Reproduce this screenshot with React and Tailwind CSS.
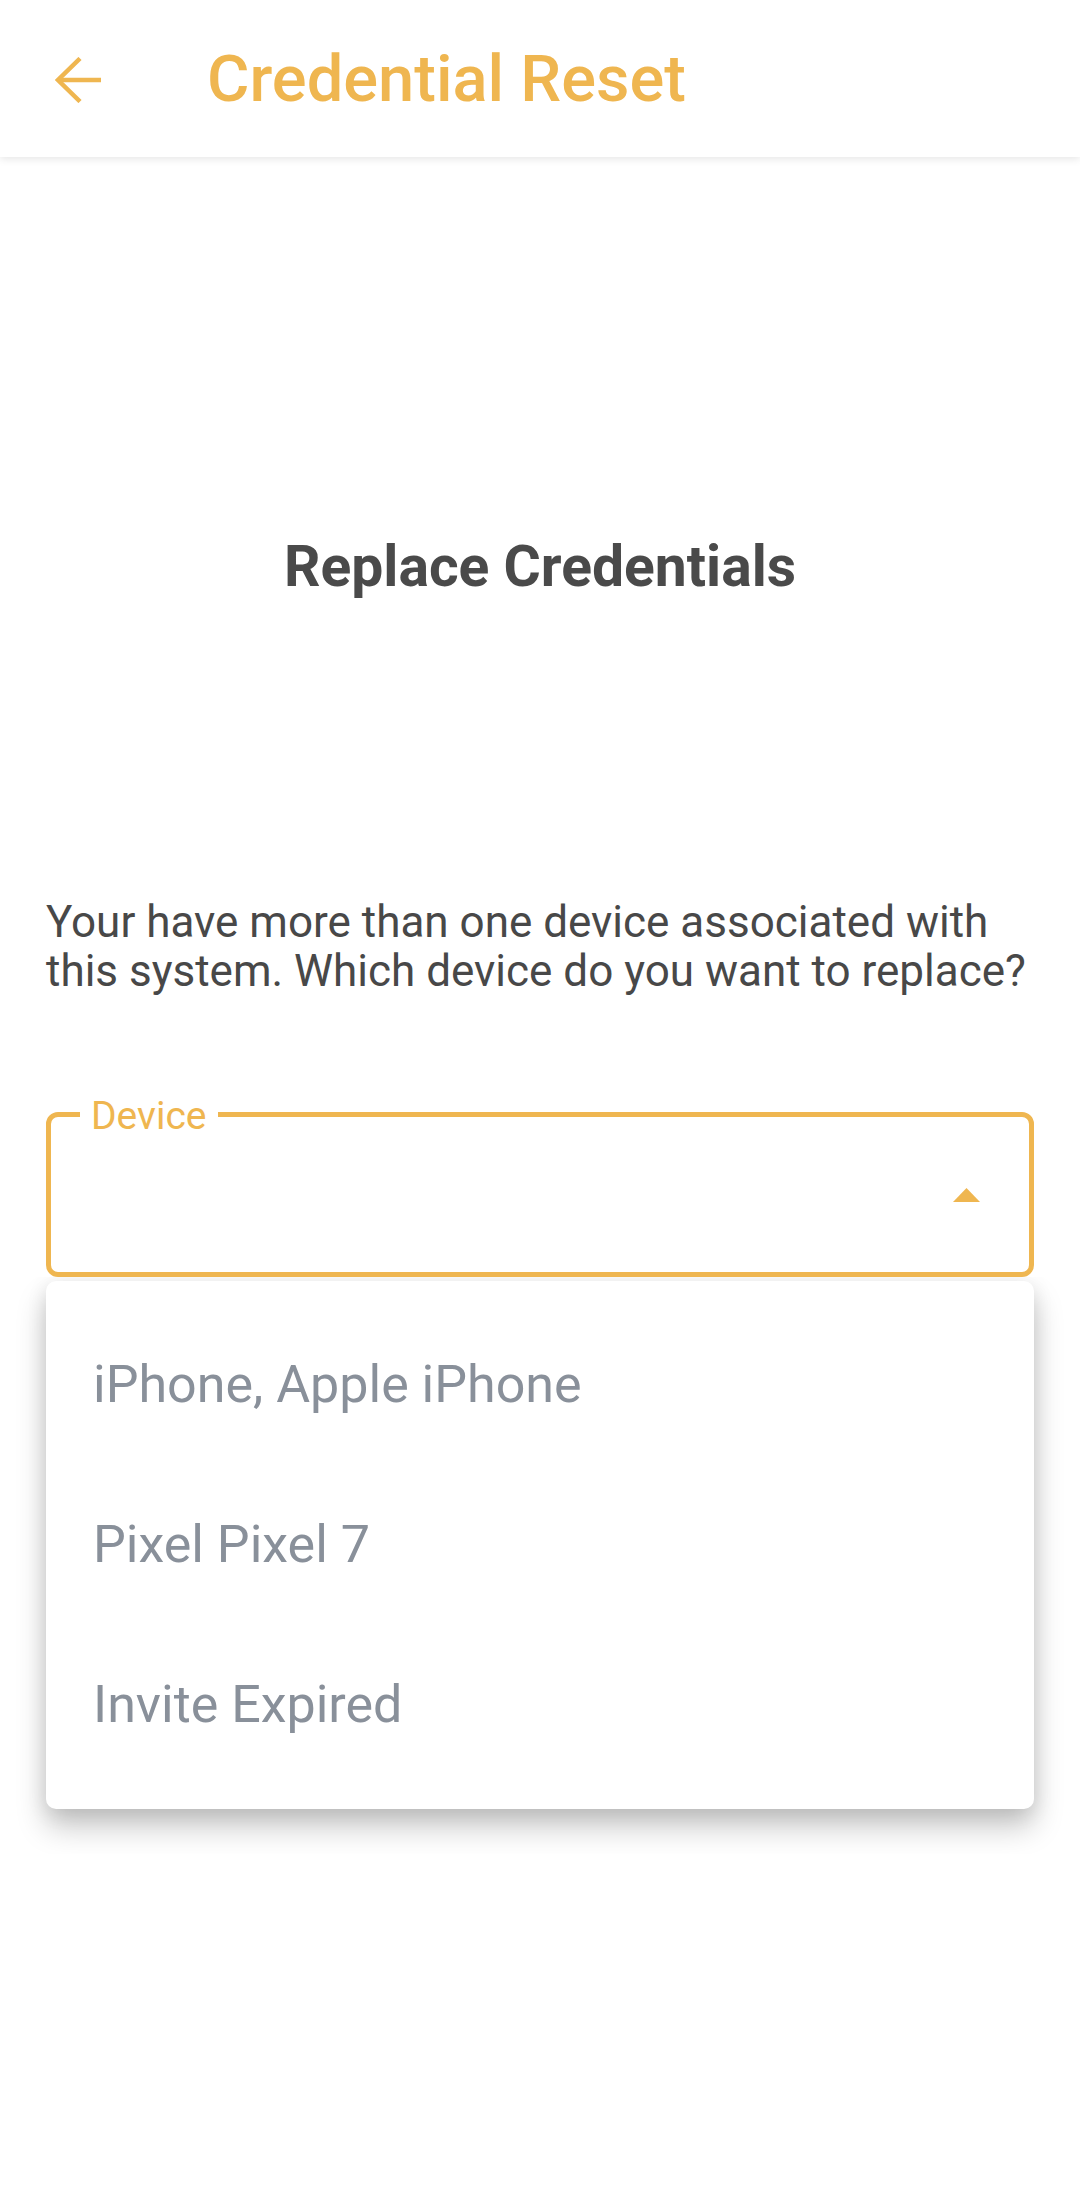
import React, { useState } from "react";

const devices = ["iPhone, Apple iPhone", "Pixel Pixel 7", "Invite Expired"];

const BackArrow = () => (
  <svg width="46" height="46" viewBox="0 0 46 46" fill="none" className="block">
    <path d="M46 23H3" stroke="#EFB650" strokeWidth="4.5" />
    <path d="M25 1.5L3 23L25 44.5" stroke="#EFB650" strokeWidth="4.5" strokeLinejoin="miter" />
  </svg>
);

const CaretUp = () => (
  <svg width="27" height="14" viewBox="0 0 27 14" className="block">
    <polygon points="13.5,0 27,14 0,14" fill="#EFB650" />
  </svg>
);

const App = () => {
  const [open] = useState(true);

  return (
    <div className="min-h-[2209px] bg-white font-['Roboto',sans-serif]">
      {/* ---------------- Header ---------------- */}
      <header className="relative z-10 h-[157px] bg-white flex items-center pl-[55px] pt-[2px] shadow-[0_2px_8px_rgba(0,0,0,0.10)]">
        <BackArrow />
        <h1 className="ml-[106px] text-[65px] leading-none font-medium text-[#EFB650]">
          Credential Reset
        </h1>
      </header>

      {/* ---------------- Body ---------------- */}
      <main className="px-[46px]">
        <h2 className="mt-[381px] text-center text-[57px] leading-none font-bold text-[#4A4A4A]">
          Replace Credentials
        </h2>

        <p className="mt-[303px] text-[44px] leading-[49px] text-[#484848]">
          Your have more than one device associated with this system. Which device do you want to replace?
        </p>

        {/* Device select */}
        <div className="relative mt-[116px]">
          <div className="relative h-[165px] border-[5px] border-[#EFB650] rounded-[12px] flex items-center justify-end pr-[49px]">
            <span className="absolute left-[29px] top-[-20px] bg-white px-[11px] text-[39px] leading-none text-[#EFB650]">
              Device
            </span>
            <CaretUp />
          </div>

          {open && (
            <div className="absolute top-full left-[-46px] right-[-46px] overflow-hidden px-[46px] pt-[4px] pb-[45px]">
              <ul className="bg-white rounded-[10px] py-[24px] shadow-[0_18px_30px_rgba(0,0,0,0.22),0_4px_20px_rgba(0,0,0,0.10)]">
                {devices.map((d) => (
                  <li key={d} className="h-[160px] flex items-center pl-[47px] text-[52px] leading-none text-[#89909A]">
                    {d}
                  </li>
                ))}
              </ul>
            </div>
          )}
        </div>
      </main>
    </div>
  );
};

export default App;
